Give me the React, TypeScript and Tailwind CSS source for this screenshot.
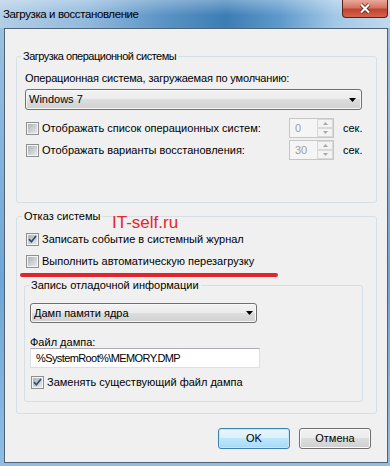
import type { ReactNode } from 'react'

function CheckBox({ checked }: { checked?: boolean }) {
  return (
    <span className="flex h-[13px] w-[13px] shrink-0 items-center justify-center border border-[#8e8f8f] bg-[#f4f4f4]">
      <span className="flex h-[9px] w-[9px] items-center justify-center bg-[linear-gradient(135deg,#aeb3b9,#e7e8ea)]">
        {checked && (
          <svg width="9" height="9" viewBox="0 0 9 9">
            <path d="M1 4.2 L3.4 6.8 L8 1" fill="none" stroke="#2d4a7c" strokeWidth="1.7" />
          </svg>
        )}
      </span>
    </span>
  )
}

function Arrow() {
  return (
    <svg width="7" height="4" viewBox="0 0 7 4">
      <path d="M0 0 H7 L3.5 4 Z" fill="#000" />
    </svg>
  )
}

function Combo({ text, className }: { text: string; className: string }) {
  return (
    <div
      className={`flex items-center justify-between rounded-[3px] border border-[#707070] bg-[linear-gradient(180deg,#f3f3f3,#ebebeb_50%,#dddddd_50%,#d1d1d1)] pl-[3px] shadow-[inset_0_0_0_1px_#f8f8f8] ${className}`}
    >
      <span className="leading-[15px]">{text}</span>
      <Arrow />
    </div>
  )
}

function SpinBtn({ up }: { up?: boolean }) {
  return (
    <span className="flex flex-1 items-center justify-center border border-[#d9d9d9] bg-[#f3f3f3]">
      <svg width="5" height="3" viewBox="0 0 5 3">
        <path d={up ? 'M0 3 H5 L2.5 0 Z' : 'M0 0 H5 L2.5 3 Z'} fill="#a8a8a8" />
      </svg>
    </span>
  )
}

function Spin({ value }: { value: string }) {
  return (
    <div className="flex h-[20px] w-[45px] border border-[#c6c6c6] bg-[#f5f5f5]">
      <span className="flex-1 pl-[5px] leading-[18px] text-[#9d9d9d]">{value}</span>
      <div className="flex w-[16px] flex-col">
        <SpinBtn up />
        <SpinBtn />
      </div>
    </div>
  )
}

function CheckRow({ checked, children, className }: { checked?: boolean; children: ReactNode; className: string }) {
  return (
    <div className={`flex items-center gap-[3px] ${className}`}>
      <CheckBox checked={checked} />
      <span className="leading-[15px]">{children}</span>
    </div>
  )
}

export default function App() {
  return (
    <div className="flex h-[466px] w-[390px] flex-col bg-[linear-gradient(180deg,#9fc2e2,#6fa6d6_60%,#8fbde3)] font-['Liberation_Sans',Arial,sans-serif] text-[11px] text-black">
      {/* title bar */}
      <div className="flex h-[28px] shrink-0 items-start justify-between bg-[linear-gradient(180deg,rgba(255,255,255,0.3),rgba(255,255,255,0)_55%),linear-gradient(90deg,#b3cee6_0%,#93bade_22%,#5a93c4_42%,#3c7db5_58%,#5f9acb_72%,#a3c8e7_86%,#c0d9ee_100%)]">
        <span className="pl-[3px] pt-[7px] text-[11.5px] leading-[15px] tracking-[-0.4px]">Загрузка и восстановление</span>
        <div className="mr-[2px] flex h-[18px] w-[46px] items-center justify-center rounded-b-[4px] border border-t-0 border-[#5a211c] bg-[linear-gradient(180deg,#eaa99a,#d47563_45%,#c4412d_55%,#d2654d)]">
          <svg width="12" height="11" viewBox="0 0 12 11">
            <path d="M2 1.5 L10 9.5 M10 1.5 L2 9.5" stroke="#4a1a15" strokeWidth="3.6" />
            <path d="M2 1.5 L10 9.5 M10 1.5 L2 9.5" stroke="#fff" strokeWidth="2.2" />
          </svg>
        </div>
      </div>

      {/* client area */}
      <div className="relative ml-[4px] flex h-[435px] w-[384px] flex-col border border-[#4f6377] bg-[#f0f0f0]">
        <fieldset className="ml-[11px] mt-[20px] w-[361px] rounded-[3px] border border-[#d5dfe5]">
          <legend className="ml-[4px] px-[2px] leading-[15px] tracking-[-0.5px]">Загрузка операционной системы</legend>
          <div className="px-[8px] pb-[42px]">
            <div className="mt-[7px] leading-[15px] tracking-[-0.15px]">Операционная система, загружаемая по умолчанию:</div>
            <Combo text="Windows 7" className="mt-[3px] h-[21px] w-[337px] pr-[5px]" />
            <div className="mt-[8px] flex h-[20px] items-center">
              <CheckRow className="w-[264px] pl-[1px]">Отображать список операционных систем:</CheckRow>
              <Spin value="0" />
              <span className="ml-[9px]">сек.</span>
            </div>
            <div className="mt-[2px] flex h-[20px] items-center">
              <CheckRow className="w-[264px] pl-[1px]">Отображать варианты восстановления:</CheckRow>
              <Spin value="30" />
              <span className="ml-[9px]">сек.</span>
            </div>
          </div>
        </fieldset>

        <fieldset className="ml-[11px] mt-[6px] w-[361px] rounded-[3px] border border-[#d5dfe5]">
          <legend className="ml-[5px] px-[2px] leading-[15px]">Отказ системы</legend>
          <div className="pb-[11px]">
            <CheckRow checked className="mt-[7px] h-[16px] pl-[9px]">
              Записать событие в системный журнал
            </CheckRow>
            <CheckRow className="mt-[6px] h-[16px] pl-[9px]">Выполнить автоматическую перезагрузку</CheckRow>

            <fieldset className="ml-[7px] mt-[9px] w-[339px] rounded-[3px] border border-[#d5dfe5]">
              <legend className="ml-[4px] px-[2px] leading-[15px]">Запись отладочной информации</legend>
              <div className="pb-[11px] pl-[5px]">
                <Combo text="Дамп памяти ядра" className="mt-[10px] h-[20px] w-[227px] pr-[3px]" />
                <div className="mt-[13px] leading-[12px]">Файл дампа:</div>
                <div className="flex h-[20px] w-[230px] items-center border border-[#dbdfe6] border-t-[#abadb3] bg-white pl-[5px] tracking-[-0.6px]">
                  %SystemRoot%\MEMORY.DMP
                </div>
                <CheckRow checked className="mt-[6px] h-[16px] pl-[1px]">
                  Заменять существующий файл дампа
                </CheckRow>
              </div>
            </fieldset>
          </div>
        </fieldset>

        <div className="mt-[14px] flex justify-end gap-[9px] pr-[16px]">
          <div className="flex h-[21px] w-[72px] items-center justify-center rounded-[3px] border border-[#3c7fb1] bg-[linear-gradient(180deg,#eaf6fd,#d9f0fc_50%,#bee6fd_50%,#a7d9f5)] shadow-[inset_0_0_0_1px_#c8e8fa]">
            OK
          </div>
          <div className="flex h-[21px] w-[72px] items-center justify-center rounded-[3px] border border-[#707070] bg-[linear-gradient(180deg,#f2f2f2,#ebebeb_50%,#dddddd_50%,#cfcfcf)] shadow-[inset_0_0_0_1px_#fafafa]">
            Отмена
          </div>
        </div>

        {/* watermark and highlight stroke */}
        <span className="absolute left-[107px] top-[184px] text-[17px] leading-[20px] text-[#e5262c]">IT-self.ru</span>
        <span className="absolute left-[15px] top-[244px] h-[4px] w-[258px] rounded-full bg-[#e3242b]" />
      </div>
    </div>
  )
}
